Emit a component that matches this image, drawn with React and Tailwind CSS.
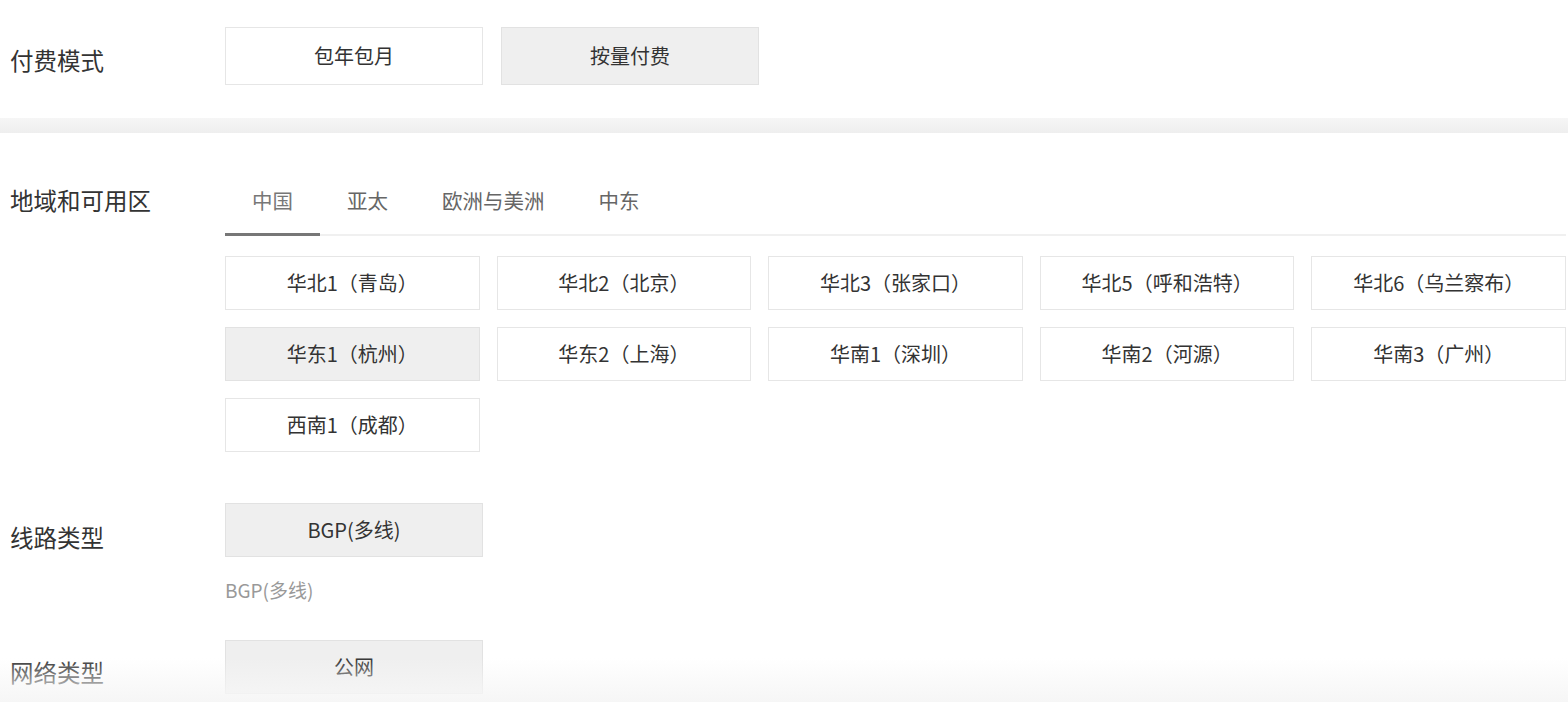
import { useState } from 'react';

const font = { fontFamily: '"Noto Sans CJK SC", "Noto Sans", sans-serif' };

const regions = [
  '华北1（青岛）',
  '华北2（北京）',
  '华北3（张家口）',
  '华北5（呼和浩特）',
  '华北6（乌兰察布）',
  '华东1（杭州）',
  '华东2（上海）',
  '华南1（深圳）',
  '华南2（河源）',
  '华南3（广州）',
  '西南1（成都）',
];

const tabs = ['中国', '亚太', '欧洲与美洲', '中东'];

const Label = ({ children, pt = 'pt-[20px]' }) => (
  <div className={`w-[225px] shrink-0 pl-[10px] text-[23.5px] leading-[28px] text-[#333] ${pt}`}>
    {children}
  </div>
);

const Option = ({ active, onClick, children, className = '' }) => (
  <button
    onClick={onClick}
    className={`flex items-center justify-center border text-[20px] leading-[28px] text-[#333] ${
      active ? 'bg-[#efefef] border-[#e2e2e2]' : 'bg-white border-[#e6e6e6]'
    } ${className}`}
  >
    {children}
  </button>
);

export default function App() {
  const [pay, setPay] = useState('按量付费');
  const [tab, setTab] = useState('中国');
  const [region, setRegion] = useState('华东1（杭州）');

  return (
    <div className="relative h-[702px] w-full overflow-hidden bg-white" style={font}>
      {/* 付费模式 */}
      <div className="flex h-[118px] pt-[27px]">
        <Label pt="pt-[19px]">付费模式</Label>
        <div className="flex gap-[18px]">
          {['包年包月', '按量付费'].map((p) => (
            <Option key={p} active={pay === p} onClick={() => setPay(p)} className="h-[58px] w-[258px]">
              {p}
            </Option>
          ))}
        </div>
      </div>

      <div className="h-[15px] bg-gradient-to-b from-[#f6f6f6] to-[#eeeeee]" />

      {/* 地域和可用区 */}
      <div className="flex pt-[53px]">
        <Label pt="pt-0">地域和可用区</Label>
        <div className="flex-1 pr-[2px]">
          <div className="flex border-b-2 border-[#f0f0f0]">
            {tabs.map((t) => (
              <button
                key={t}
                onClick={() => setTab(t)}
                className={`-mb-[2px] px-[27px] pb-[19px] text-[20.5px] leading-[28px] ${
                  tab === t ? 'border-b-[3px] border-[#777] text-[#777]' : 'border-b-[3px] border-transparent text-[#666]'
                }`}
              >
                {t}
              </button>
            ))}
          </div>
          <div className="mt-[20px] grid grid-cols-5 gap-x-[17px] gap-y-[17px]">
            {regions.map((r) => (
              <Option key={r} active={region === r} onClick={() => setRegion(r)} className="h-[54px]">
                {r}
              </Option>
            ))}
          </div>
        </div>
      </div>

      {/* 线路类型 */}
      <div className="mt-[51px] flex">
        <Label>线路类型</Label>
        <div className="flex flex-col">
          <Option active className="h-[54px] w-[258px] text-[#222]">BGP(多线)</Option>
          <div className="mt-[20px] text-[19px] leading-[26px] text-[#999]">BGP(多线)</div>
        </div>
      </div>

      {/* 网络类型 */}
      <div className="mt-[37px] flex">
        <Label pt="pt-[18px]">网络类型</Label>
        <Option active className="h-[54px] w-[258px] text-[#222]">公网</Option>
      </div>

      <div className="pointer-events-none absolute bottom-0 left-0 right-0 h-[44px] bg-gradient-to-b from-[rgba(255,255,255,0)] to-[#f6f6f6]" />
    </div>
  );
}
